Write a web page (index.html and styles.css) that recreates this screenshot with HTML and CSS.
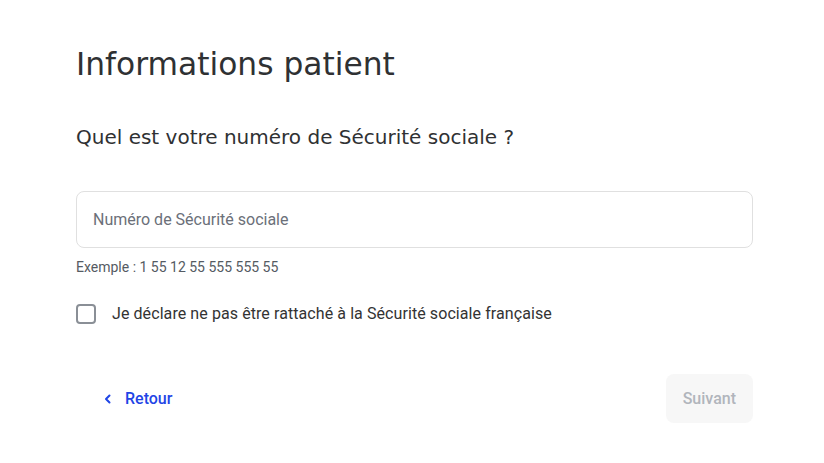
FILE: index.html
```html
<!DOCTYPE html>
<html lang="fr">
<head>
<meta charset="utf-8">
<link rel="stylesheet" href="styles.css">
</head>
<body>
<main class="page">
  <h1 class="title">Informations patient</h1>
  <h2 class="question">Quel est votre numéro de Sécurité sociale ?</h2>
  <div class="field">
    <input class="input" type="text" placeholder="Numéro de Sécurité sociale">
    <p class="hint">Exemple : 1 55 12 55 555 555 55</p>
  </div>
  <label class="check">
    <span class="box"></span>
    <span class="check-label">Je déclare ne pas être rattaché à la Sécurité sociale française</span>
  </label>
  <div class="actions">
    <button class="back" type="button">
      <svg width="12" height="12" viewBox="0 0 12 12" aria-hidden="true"><path d="M7.5 2.5 L4 6 L7.5 9.5" fill="none" stroke="currentColor" stroke-width="2" stroke-linecap="round" stroke-linejoin="round"/></svg>
      <span>Retour</span>
    </button>
    <button class="next" type="button">Suivant</button>
  </div>
</main>
</body>
</html>
```
FILE: styles.css
```css
* { box-sizing: border-box; }
html, body { margin: 0; padding: 0; background: #fff; }
body { font-family: Roboto, "Liberation Sans", sans-serif; color: #333; }
.page { padding: 44px 71px 0 76px; display: flex; flex-direction: column; }
.title {
  margin: 0;
  font-family: "DejaVu Sans", sans-serif;
  font-weight: 400;
  font-size: 31.3px;
  line-height: 40px;
  color: #2f3133;
}
.question {
  margin: 40px 0 0;
  font-family: "DejaVu Sans", sans-serif;
  font-weight: 400;
  font-size: 20px;
  line-height: 26px;
  color: #2f3133;
}
.field { margin-top: 41px; }
.input {
  display: block;
  width: 100%;
  height: 57px;
  border: 1px solid #e0e0e0;
  border-radius: 8px;
  padding: 0 16px;
  font-family: Roboto, sans-serif;
  font-size: 16px;
  color: #333;
  outline: none;
}
.input::placeholder { color: #6b7079; }
.hint {
  margin: 11px 0 0;
  font-size: 14px;
  line-height: 16px;
  color: #555b63;
}
.check {
  margin-top: 29px;
  display: flex;
  align-items: center;
  gap: 16px;
}
.box {
  width: 20px; height: 20px;
  border: 2px solid #8a8f96;
  border-radius: 4px;
  flex: none;
}
.check-label { font-size: 16px; line-height: 20px; color: #333; letter-spacing: 0.08px; }
.actions {
  margin-top: 50px;
  display: flex;
  justify-content: space-between;
  align-items: center;
}
.back {
  display: flex; align-items: center; gap: 11px;
  background: none; border: 0;
  padding: 0 0 0 26px;
  height: 49px;
  color: #1f45e6;
  font-family: Roboto, sans-serif;
  font-weight: 500;
  font-size: 16px;
  cursor: pointer;
}
.next {
  height: 49px;
  padding: 0 17px;
  border: 0;
  border-radius: 8px;
  background: #f7f7f7;
  color: #b1b5bc;
  font-family: Roboto, sans-serif;
  font-weight: 500;
  font-size: 16px;
}
```
